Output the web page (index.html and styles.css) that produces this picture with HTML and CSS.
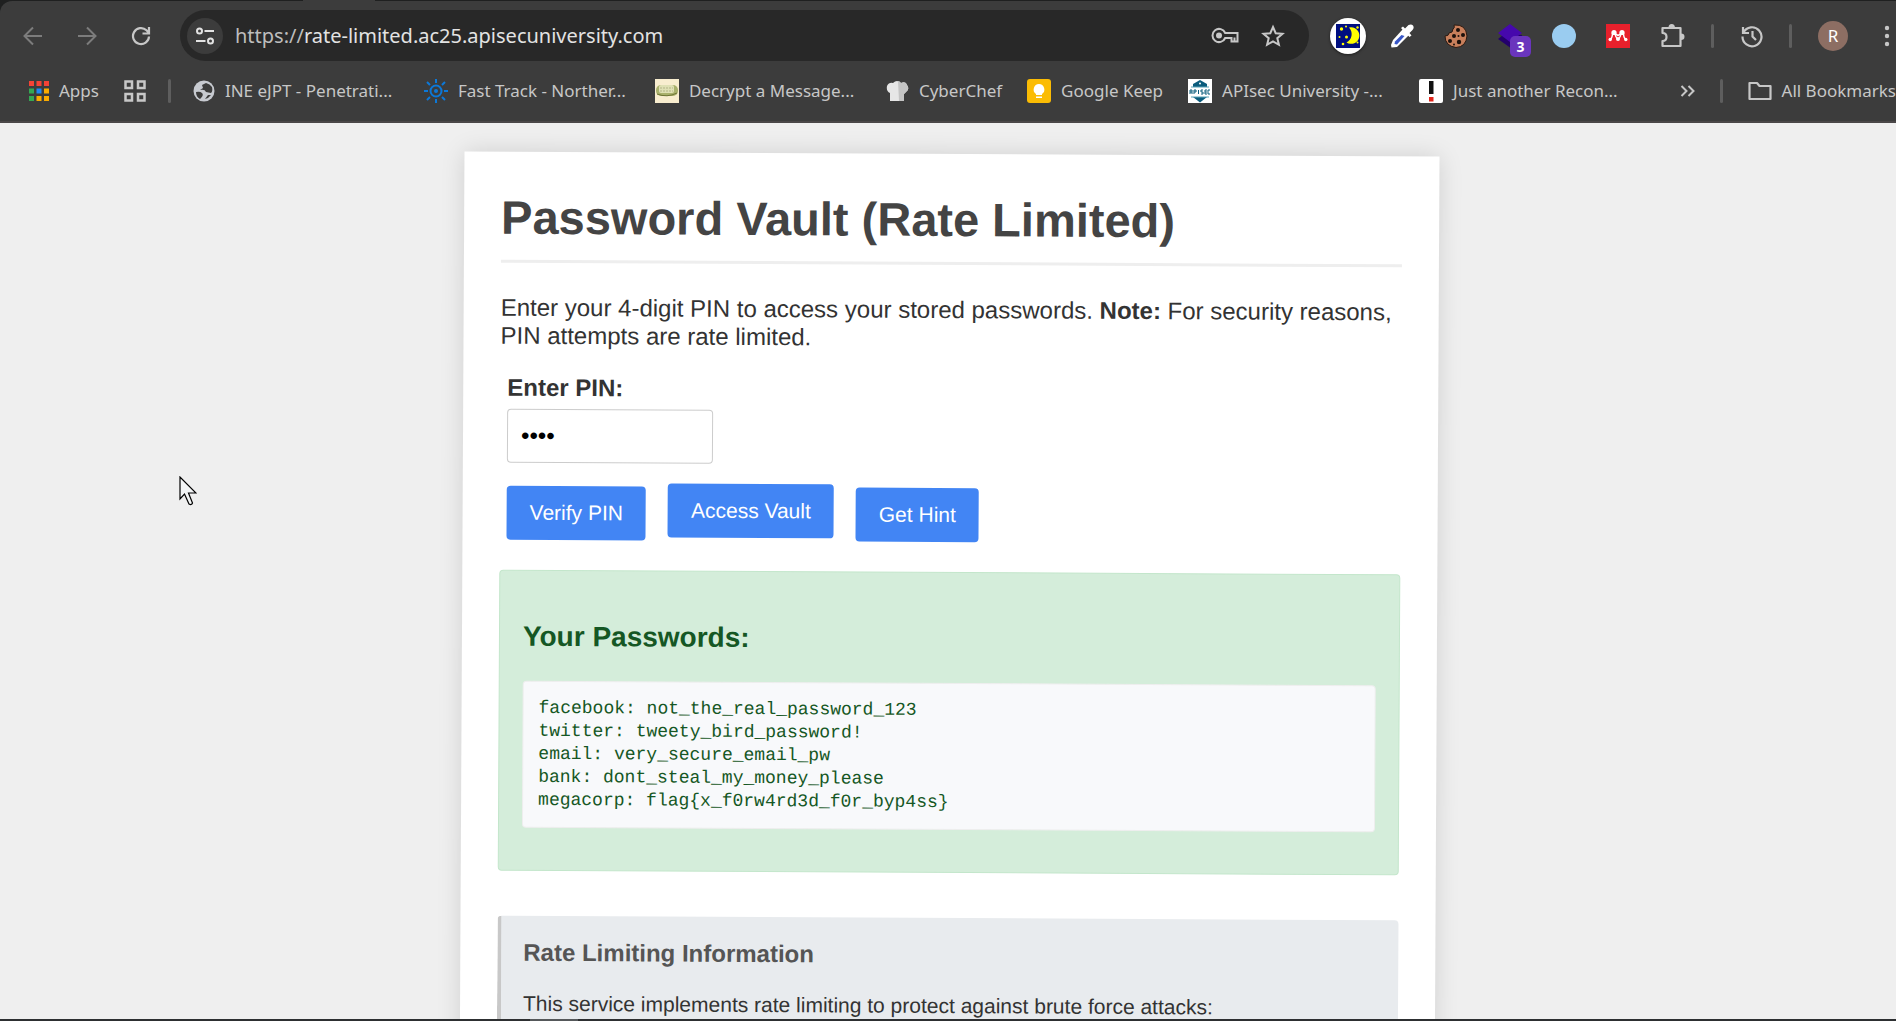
FILE: index.html
```html
<!DOCTYPE html>
<html lang="en">
<head>
<meta charset="utf-8">
<title>Password Vault (Rate Limited)</title>
<link rel="stylesheet" href="styles.css">
</head>
<body>
<div class="tabstrip"><span class="tabstrip-active"></span></div>
<header class="chrome">
  <div class="toolbar">
    <nav class="nav-buttons" aria-label="Navigation">
      <button class="icon-btn dim" aria-label="Back"><svg width="20" height="20" viewBox="0 0 20 20" fill="none" stroke="currentColor" stroke-width="2"><path d="M19 10H2M10 1.500L1.500 10L10 18.500"/></svg></button>
      <button class="icon-btn dim" aria-label="Forward"><svg width="20" height="20" viewBox="0 0 20 20" fill="none" stroke="currentColor" stroke-width="2"><path d="M1 10H18M10 1.500L18.500 10L10 18.500"/></svg></button>
      <button class="icon-btn" aria-label="Reload"><svg width="20" height="20" viewBox="0 0 20 20" fill="none" stroke="currentColor" stroke-width="2.200"><path d="M18 10.500A8 8 0 1 1 15.500 4.300L18 7M18 1V7.500H11.500"/></svg></button>
    </nav>
    <div class="omnibox">
      <button class="site-info" aria-label="Site information"><svg width="20" height="20" viewBox="0 0 20 20" fill="none" stroke="#e3e3e3" stroke-width="2"><circle cx="4.500" cy="5" r="2.500"/><path d="M9.500 5H19M1 15H10.500"/><circle cx="15.500" cy="15" r="2.500"/></svg></button>
      <div class="url"><span class="scheme">https://</span>rate-limited.ac25.apisecuniversity.com</div>
      <button class="icon-btn" aria-label="Passwords"><svg width="28" height="18" viewBox="0 0 28 18" fill="none" stroke="currentColor" stroke-width="2"><path d="M14.200 6H26.500V14.500H20.500V11H14.200A6.600 6.600 0 1 1 14.200 6Z"/><path d="M23.500 14V10.500"/><circle cx="8" cy="8.500" r="3" fill="currentColor" stroke="none"/></svg></button>
      <button class="icon-btn star" aria-label="Bookmark this page"><svg width="24" height="24" viewBox="0 0 24 24" fill="none" stroke="currentColor" stroke-width="2"><path d="M12 3L14.700 9.200L21.500 9.800L16.300 14.200L17.900 20.800L12 17.300L6.100 20.800L7.700 14.200L2.500 9.800L9.300 9.200Z"/></svg></button>
    </div>
    <div class="extensions">
      <button class="icon-btn moon" aria-label="Dark mode"><svg width="24" height="24" viewBox="0 0 24 24"><rect width="24" height="24" fill="#000f80"/><path d="M13 3.500A8.300 8.300 0 1 1 10.500 18.500A9.500 9.500 0 0 0 13 3.500Z" fill="#ff0"/><g fill="#ff0"><circle cx="5.500" cy="5" r="1.700"/><circle cx="10" cy="2.500" r="1"/><circle cx="21.500" cy="3.500" r="1.200"/><circle cx="3.500" cy="13" r="1"/><circle cx="10.500" cy="13" r="1.500"/><circle cx="7" cy="20" r="1.300"/><circle cx="21.500" cy="18.500" r="1"/></g></svg></button>
      <button class="icon-btn" aria-label="Color picker"><svg width="24" height="24" viewBox="0 0 24 24"><path d="M13 5L19 11L7 23L1.500 23.500L1 21L3 16Z" fill="#fff"/><path d="M11.500 11L14.500 12L7 20.500L4.500 20L5 17.500Z" fill="#3857c8"/><path d="M11 4L13 2.500L15 4.500L18.500 1Q21.500 0 23 1.500Q24.500 4 22.500 6L19.500 9L21.500 11.500L19.500 13Z" fill="#fff"/></svg></button>
      <button class="icon-btn" aria-label="Cookies"><svg width="24" height="24" viewBox="0 0 24 24"><path d="M10 1Q22 0 23 12Q22 23 12 23.500Q1 22 1 12Q5 12 5 9Q9 9 9 5Q11 4 10 1Z" fill="#c87f5b" stroke="#2b1a12"/><g fill="#1b100b"><circle cx="14" cy="6" r="2"/><circle cx="19" cy="11" r="2"/><circle cx="10" cy="12" r="2"/><circle cx="6" cy="17" r="2"/><circle cx="15" cy="18" r="2.200"/><circle cx="14.500" cy="12" r="1"/><circle cx="10" cy="20.500" r="1"/></g></svg></button>
      <button class="icon-btn badge-host" aria-label="Technology profiler, 3 found"><svg width="24" height="24" viewBox="0 0 24 24"><path d="M0 15L5 11H24V15L12 23.500Z" fill="#23006b"/><path d="M12 0L24 9L12 18L0 9Z" fill="#4608ad"/></svg><span class="badge">3</span></button>
      <button class="icon-btn" aria-label="Blue extension"><svg width="24" height="24" viewBox="0 0 24 24"><circle cx="12" cy="12" r="12" fill="#9accf0"/></svg></button>
      <button class="icon-btn" aria-label="Mendeley"><svg width="24" height="24" viewBox="0 0 24 24"><rect width="24" height="24" fill="#e8202c"/><path d="M4.200 15.500Q6.500 14 6.500 9M19.800 15.500Q17.500 14 17.500 9M8.500 9L12 11.500L15.500 9M9 10Q9.500 13 12 15.500Q14.500 13 15 10" fill="none" stroke="#fff" stroke-width="1.500"/><g fill="#fff"><circle cx="8" cy="8.500" r="2.600"/><circle cx="16" cy="8.500" r="2.600"/><circle cx="4.200" cy="15.500" r="1.700"/><circle cx="12" cy="15" r="2"/><circle cx="19.800" cy="15.500" r="1.700"/></g></svg></button>
      <button class="icon-btn" aria-label="Extensions"><svg width="26" height="26" viewBox="0 0 26 26"><path d="M2.500 5H20.500V23H2.500V18Q6.500 18 6.500 14T2.500 10Z" fill="none" stroke="currentColor" stroke-width="2.200" stroke-linejoin="round"/><path d="M8.500 4.500a3.200 3.500 0 0 1 6.400 0zM21 10.500a3.500 3.200 0 0 1 0 6.400z" fill="currentColor"/></svg></button>
      <span class="divider"></span>
      <button class="icon-btn" aria-label="History"><svg width="24" height="24" viewBox="0 0 24 24" fill="none" stroke="currentColor" stroke-width="2.200"><path d="M3 3V9H9M3.500 8.500A9.500 9.500 0 1 1 2.500 12.500M12.500 7V12.500L16 16"/></svg></button>
      <span class="divider"></span>
      <button class="avatar" aria-label="Profile">R</button>
      <button class="icon-btn menu" aria-label="Menu"><svg width="6" height="24" viewBox="0 0 6 24" fill="currentColor"><circle cx="3" cy="4" r="2.200"/><circle cx="3" cy="12" r="2.200"/><circle cx="3" cy="20" r="2.200"/></svg></button>
    </div>
  </div>
  <nav class="bookmarks" aria-label="Bookmarks">
    <a class="bookmark" href="#"><svg width="20" height="20" viewBox="0 0 20 20"><g fill="#f44336"><path d="M0 0h5v5H0zM7.500 0h5v5h-5zM15 0h5v5h-5z"/></g><g fill="#34a853"><path d="M0 7.500h5v5H0zM0 15h5v5H0z"/></g><path d="M7.500 7.500h5v5h-5z" fill="#1e88f5"/><g fill="#fbab00"><path d="M15 7.500h5v5h-5zM7.500 15h5v5h-5zM15 15h5v5h-5z"/></g></svg>Apps</a>
    <button class="icon-btn groups" aria-label="Tab groups"><svg width="22" height="22" viewBox="0 0 22 22" fill="none" stroke="currentColor" stroke-width="2.500"><path d="M1.500 1.500h6.500v6.500h-6.500zM14 1.500h6.500v6.500h-6.500zM1.500 14h6.500v6.500h-6.500zM14 14h6.500v6.500h-6.500z"/></svg></button>
    <span class="divider"></span>
    <a class="bookmark long first" href="#"><svg width="22" height="22" viewBox="0 0 22 22"><circle cx="11" cy="11" r="10.500" fill="#c7cad0"/><path d="M3 12Q7 11 9 13T8 18L7 19Q3 17 3 12ZM13 3L9 5L10 8L7 10Q12 9 13 12L18 13Q20 11 19 7Q17 4 13 3ZM15 15L12 19Q16 18 18 15Z" fill="#3c3c3c"/></svg>INE eJPT - Penetrati...</a>
    <a class="bookmark long" href="#"><svg width="24" height="24" viewBox="0 0 24 24" fill="none" stroke="#0c78d8" stroke-width="2"><circle cx="12" cy="12" r="5.500"/><circle cx="12" cy="12" r="1" /><path d="M12 0V4M12 20V24M0 12H4M20 12H24M3 3L6 6M18 18L21 21M21 3L18 6M6 18L3 21"/></svg>Fast Track - Norther...</a>
    <a class="bookmark long" href="#"><svg width="24" height="24" viewBox="0 0 24 24"><rect width="24" height="24" fill="#f8edcf"/><rect x="1" y="6" width="22" height="11" rx="5" fill="#a9b16c"/><rect x="4" y="6" width="15" height="8" rx="2" fill="#dfe0b4"/><path d="M5 9H18M5 12H18" stroke="#b3b487" stroke-dasharray="2 1"/><path d="M2 15Q12 19 22 14" stroke="#6e7435" fill="none"/></svg>Decrypt a Message...</a>
    <a class="bookmark" href="#"><svg width="23" height="23" viewBox="0 0 23 23"><path d="M4 21V13Q0 11 1 6Q3 2 7 3Q11 -1 15 3Q20 1 21 5Q24 9 20 12L18 14V21Z" fill="#e6e6e6"/><path d="M12 1Q14 1 15 3Q20 1 21 5Q24 9 20 12L18 14V21H13Z" fill="#c4c4c4"/></svg>CyberChef</a>
    <a class="bookmark" href="#"><svg width="24" height="24" viewBox="0 0 24 24"><rect width="24" height="24" rx="3" fill="#fbbc04"/><path d="M12 5a5.500 5.500 0 0 1 3 10v1H9v-1a5.500 5.500 0 0 1 3-10zM9 17.500h6V19H9z" fill="#fff"/></svg>Google Keep</a>
    <a class="bookmark long" href="#"><svg width="24" height="24" viewBox="0 0 24 24"><rect width="24" height="24" fill="#fff"/><path d="M12 1L19 5V8H5V5ZM5 18H19L12 23.500Z" fill="#0b5c7d"/><path d="M3 8H21M3 18H21" stroke="#5aa3b8"/><path d="M2 15V11h2v4M2 13h2M6 15V11h2v2H6M10.500 11v4M15 11h-2v2h2v2h-2M19 11h-2v4h2M17 13h2M22 11h-2v4h2" fill="none" stroke="#0b5c7d"/><circle cx="12" cy="4.500" r="1" fill="#fff"/></svg>APIsec University -...</a>
    <a class="bookmark long" href="#"><svg width="24" height="24" viewBox="0 0 24 24"><rect width="24" height="24" rx="2" fill="#fff"/><path d="M10 2H14.500V15H10Z" fill="#111"/><path d="M10 18H14.500V22.500H10Z" fill="#e1251b"/></svg>Just another Recon...</a>
    <div class="bookmarks-end">
      <button class="icon-btn" aria-label="More bookmarks"><svg width="15" height="12" viewBox="0 0 15 12" fill="none" stroke="currentColor" stroke-width="2"><path d="M1.500 1L6.500 6L1.500 11M8.500 1L13.500 6L8.500 11"/></svg></button>
      <span class="divider"></span>
      <a class="bookmark" href="#"><svg width="24" height="20" viewBox="0 0 24 20" fill="none" stroke="currentColor" stroke-width="2.200" stroke-linejoin="round"><path d="M1.500 2H9L11.500 5H22.500V18H1.500Z"/></svg>All Bookmarks</a>
    </div>
  </nav>
</header>
<main class="viewport">
  <section class="card">
    <h1>Password Vault (Rate Limited)</h1>
    <p class="intro">Enter your 4-digit PIN to access your stored passwords. <strong>Note:</strong> For security reasons, PIN attempts are rate limited.</p>
    <form class="pin-form">
      <label for="pin">Enter PIN:</label>
      <input id="pin" type="password" value="1234" maxlength="4" autocomplete="off">
      <div class="actions">
        <button type="button">Verify PIN</button>
        <button type="button">Access Vault</button>
        <button type="button">Get Hint</button>
      </div>
    </form>
    <div class="result">
      <h3>Your Passwords:</h3>
      <pre>facebook: not_the_real_password_123
twitter: tweety_bird_password!
email: very_secure_email_pw
bank: dont_steal_my_money_please
megacorp: flag{x_f0rw4rd3d_f0r_byp4ss}</pre>
    </div>
    <div class="info">
      <h4>Rate Limiting Information</h4>
      <p>This service implements rate limiting to protect against brute force attacks:</p>
    </div>
  </section>
  <svg class="cursor" width="18" height="31" viewBox="0 0 18 31"><path d="M1 1V23L5.500 18L10 28Q12.500 29.500 13.500 27L9.500 17H17Z" fill="#f3f5f6" stroke="#000" stroke-width="1.200"/></svg>
</main>
<footer class="taskbar"><span class="taskbar-item"></span></footer>
</body>
</html>
```
FILE: styles.css
```css
* { box-sizing: border-box; }

body {
  margin: 0;
  height: 100vh;
  display: flex;
  flex-direction: column;
  overflow: hidden;
  background: #efefef;
  color: #333;
  font-family: "Liberation Sans", Arial, sans-serif;
}

h1, h3, h4, p, pre { margin: 0; }

button {
  font: inherit;
  border: 0;
  padding: 0;
  background: none;
  color: inherit;
}

svg { display: block; flex: none; }

/* Browser chrome */
.tabstrip {
  flex: none;
  height: 1px;
  padding-left: 303px;
  background: #1f2020;
}

.tabstrip-active {
  display: block;
  width: 72px;
  height: 1px;
  background: #3c3c3c;
}

.chrome {
  flex: none;
  margin-right: -24px;
  background: #3c3c3c;
  border-top-left-radius: 12px;
  border-bottom: 2px solid #4a4748;
  box-shadow: -12px -12px 0 12px #1f2020;
  clip-path: inset(0);
  color: #c7c7c7;
  font-family: "Noto Sans", "Open Sans", sans-serif;
  font-size: 17px;
}

.toolbar {
  display: flex;
  align-items: center;
  height: 51px;
  margin-top: 9px;
}

.nav-buttons {
  display: flex;
  gap: 34px;
  padding: 0 29px 0 23px;
}

.icon-btn { display: flex; align-items: center; flex: none; }
.dim { color: #7c7c7c; }

.omnibox {
  flex: 1;
  display: flex;
  align-items: center;
  height: 51px;
  padding: 0 24px 0 7px;
  border-radius: 26px;
  background: #282828;
}

.site-info {
  display: grid;
  place-items: center;
  width: 36px;
  height: 36px;
  border-radius: 50%;
  background: #3c3c3c;
}

.url {
  flex: 1;
  padding-left: 12px;
  color: #e3e3e3;
  font-size: 20px;
  line-height: 28px;
}

.scheme { color: #bdbdbd; }
.star { margin-left: 22px; }

.extensions {
  display: flex;
  align-items: center;
  gap: 30px;
  padding: 0 30px 0 21px;
}

.extensions .divider { margin: 0 -4px 0 -5px; }
.menu { margin-left: 6px; }

.moon {
  width: 36px;
  height: 36px;
  margin-right: -6px;
  justify-content: center;
  border-radius: 50%;
  background: #fff;
  box-shadow: 0 1px 3px rgba(0, 0, 0, .5);
}

.badge-host { position: relative; }

.badge {
  position: absolute;
  left: 12px;
  top: 12px;
  width: 21px;
  height: 21px;
  border-radius: 5px;
  background: #6a35bd;
  color: #fff;
  font-size: 14px;
  font-weight: 700;
  line-height: 21px;
  text-align: center;
}

.divider {
  flex: none;
  width: 3px;
  height: 24px;
  border-radius: 2px;
  background: #5e5e5e;
}

.avatar {
  width: 30px;
  height: 30px;
  border-radius: 50%;
  background: #8d6e63;
  color: #fff;
  font-size: 17px;
  line-height: 30px;
}

.bookmarks {
  display: flex;
  align-items: center;
  height: 60px;
  padding: 0 24px 0 29px;
}

.bookmark {
  display: flex;
  align-items: center;
  flex: none;
  gap: 10px;
  padding-right: 25px;
  color: inherit;
  line-height: 24px;
  text-decoration: none;
  white-space: nowrap;
}

.long { width: 231px; }
.groups { margin-right: 22px; }
.first { margin-left: 22px; }

.bookmarks-end {
  display: flex;
  align-items: center;
  gap: 25px;
  margin-left: auto;
}

.bookmarks-end .bookmark { padding: 0; }

/* Page */
.viewport {
  position: relative;
  flex: 1;
  min-height: 0;
  overflow: hidden;
  padding-top: 31px;
}

.card {
  max-width: 975px;
  margin: 0 auto;
  padding: 38px 37px;
  background: #fff;
  box-shadow: 0 0 25px rgba(0, 0, 0, .13);
  transform: rotate(.3deg);
  transform-origin: 50% 669px;
}

h1 {
  padding-bottom: 14px;
  border-bottom: 3px solid #eee;
  color: #444;
  font-size: 47px;
  line-height: 56px;
}

.intro {
  margin-top: 31px;
  font-size: 24px;
  line-height: 28px;
}

.pin-form {
  padding: 24px 7px 30px;
  font-size: 24px;
  line-height: 28px;
}

.pin-form label {
  display: block;
  font-weight: 700;
}

.pin-form input {
  display: block;
  width: 206px;
  height: 54px;
  margin-top: 7px;
  padding: 0 13px;
  border: 1px solid #ccc;
  border-radius: 4px;
  background: #fff;
  color: #000;
  font: 24px "Liberation Sans", Arial, sans-serif;
}

.actions {
  display: flex;
  align-items: flex-start;
  gap: 22px;
  margin-top: 23px;
}

.actions button {
  height: 54px;
  padding: 0 23px;
  border-radius: 4px;
  background: #4285f4;
  color: #fff;
  font-size: 21px;
}

.actions button:nth-child(even) { margin-top: -3px; }

.result {
  padding: 50px 23px 42px;
  border: 1px solid #c3e6cb;
  border-radius: 4px;
  background: #d4edda;
  color: #155724;
}

h3 {
  font-size: 28px;
  line-height: 32px;
}

pre {
  margin-top: 28px;
  padding: 15px;
  border: 1px solid #eee;
  border-radius: 4px;
  background: #f8f9fb;
  font: 18px/23px "Liberation Mono", monospace;
}

.info {
  margin-top: 45px;
  padding: 23px 22px;
  border-left: 4px solid #c8c8c8;
  border-radius: 4px;
  background: #e8ebee;
}

h4 {
  color: #555;
  font-size: 24px;
  line-height: 28px;
}

.info p {
  margin-top: 24px;
  font-size: 21px;
  line-height: 26px;
}

.cursor {
  position: absolute;
  left: 179px;
  top: 353px;
}

.taskbar {
  flex: none;
  height: 2px;
  padding-left: 530px;
  background: #2d2f31;
}

.taskbar-item {
  display: block;
  width: 48px;
  height: 2px;
  background: #55585a;
}
```
